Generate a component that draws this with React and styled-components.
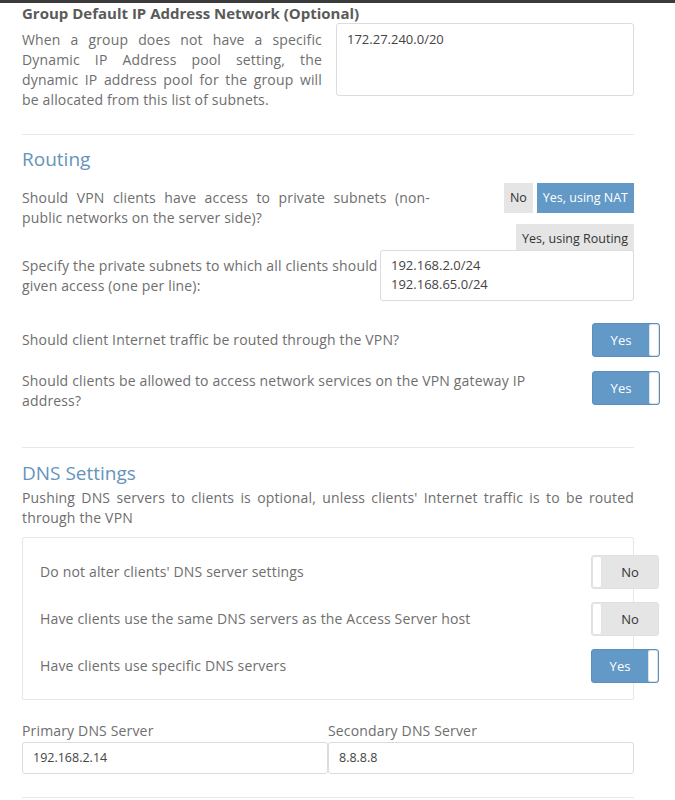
import React from 'react';
import styled, { createGlobalStyle } from 'styled-components';

const Global = createGlobalStyle`
  body {
    margin: 0;
    background: #fff;
    font-family: "Open Sans", "DejaVu Sans", sans-serif;
    color: #6e6e6e;
  }
`;

const TopBar = styled.div`
  height: 3px;
  background: #3b3b3b;
`;

const Page = styled.div`
  padding: 0 41px 0 22px;
`;

const GroupTitle = styled.h3`
  margin: 0;
  padding-top: 1px;
  font-size: 15px;
  font-weight: 700;
  color: #5a5a5a;
  line-height: 18px;
`;

const TwoCol = styled.div`
  display: grid;
  grid-template-columns: 300px 1fr;
  gap: 14px;
  margin-top: 1px;
`;

const Para = styled.p`
  margin: 0;
  font-size: 14px;
  letter-spacing: 0.16px;
  line-height: 20px;
  text-align: ${(p) => (p.justify ? 'justify' : 'left')};
  padding-top: ${(p) => p.top || 0}px;
`;

const TextBox = styled.div`
  border: 1px solid #dcdcdc;
  border-radius: 3px;
  background: #fff;
  padding: 6px 10px;
  font-size: 13px;
  line-height: 19px;
  color: #444;
  height: ${(p) => p.h}px;
  box-sizing: border-box;
`;

const Divider = styled.hr`
  border: 0;
  border-top: 1px solid #e8e8e8;
  margin: ${(p) => p.top}px 0 0;
`;

const SectionTitle = styled.h2`
  margin: ${(p) => p.top}px 0 0;
  font-size: 19px;
  font-weight: 400;
  color: #6593bb;
  line-height: 26px;
`;

const Question = styled.div`
  display: flex;
  justify-content: space-between;
  align-items: flex-start;
  margin-top: ${(p) => p.top || 0}px;
`;

const QuestionText = styled(Para)`
  max-width: 408px;
`;

const ButtonGroup = styled.div`
  display: flex;
  flex-wrap: wrap;
  justify-content: flex-end;
  width: 135px;
  gap: 11px 4px;
  margin-top: -5px;
`;

const ChoiceButton = styled.div`
  padding: 0 6px;
  height: 30px;
  line-height: 30px;
  font-size: 12.5px;
  color: ${(p) => (p.active ? '#fff' : '#333')};
  background: ${(p) => (p.active ? '#6399c6' : '#e5e5e5')};
  white-space: nowrap;
`;

const SubnetRow = styled.div`
  display: grid;
  grid-template-columns: 358px 1fr;
  margin-top: -4px;
`;

const SubnetLabel = styled(Para)`
  grid-column: 1 / 3;
  grid-row: 1;
  width: 405px;
  padding-top: 6px;
`;

const SubnetBox = styled(TextBox)`
  grid-column: 2;
  grid-row: 1;
  z-index: 1;
  padding: 5px 10px;
`;

const ToggleRow = styled.div`
  display: flex;
  justify-content: space-between;
  align-items: center;
  margin-top: ${(p) => p.top || 0}px;
  margin-right: -26px;
`;

const ToggleText = styled(Para)`
  max-width: 545px;
`;

const Toggle = styled.div`
  flex: none;
  width: 68px;
  height: 34px;
  box-sizing: border-box;
  border-radius: 3px;
  border: 1px solid ${(p) => (p.on ? '#5a8fbc' : '#e0e0e0')};
  background: ${(p) => (p.on ? '#6399c6' : '#e5e5e5')};
  display: flex;
  flex-direction: ${(p) => (p.on ? 'row' : 'row-reverse')};
  overflow: hidden;
  margin-top: ${(p) => (p.lift ? -6 : 0)}px;
`;

const ToggleLabel = styled.div`
  flex: 1;
  text-align: center;
  line-height: 32px;
  font-size: 13px;
  color: ${(p) => (p.on ? '#fff' : '#333')};
`;

const Knob = styled.div`
  width: 10px;
  background: #fff;
  border-radius: 3px;
  box-shadow: inset 0 0 0 1px #e2e2e2;
`;

const DnsBox = styled.div`
  border: 1px solid #e6e6e6;
  border-radius: 2px;
  margin-top: 9px;
  padding: 17px 0 16px 17px;
  display: flex;
  flex-direction: column;
  gap: 13px;
`;

const DnsGrid = styled.div`
  display: grid;
  grid-template-columns: 306px 1fr;
  margin-top: 21px;
`;

const Field = styled.div`
  display: flex;
  flex-direction: column;
`;

const FieldLabel = styled.label`
  font-size: 14px;
  letter-spacing: 0.16px;
  line-height: 20px;
  margin-bottom: 1px;
`;

const Input = styled.div`
  height: 32px;
  box-sizing: border-box;
  border: 1px solid #dcdcdc;
  border-radius: 3px;
  padding: 0 10px;
  line-height: 30px;
  font-size: 12.5px;
  color: #444;
`;

const Switch = ({ on, lift }) => (
  <Toggle on={on} lift={lift}>
    <ToggleLabel on={on}>{on ? 'Yes' : 'No'}</ToggleLabel>
    <Knob />
  </Toggle>
);

export default function App() {
  return (
    <>
      <Global />
      <TopBar />
      <Page>
        <GroupTitle>Group Default IP Address Network (Optional)</GroupTitle>
        <TwoCol>
          <Para justify top={7}>
            When a group does not have a specific Dynamic IP Address pool setting, the dynamic IP
            address pool for the group will be allocated from this list of subnets.
          </Para>
          <TextBox h={73}>172.27.240.0/20</TextBox>
        </TwoCol>

        <Divider top={24} />
        <SectionTitle top={11}>Routing</SectionTitle>

        <Question top={16}>
          <QuestionText justify>
            Should VPN clients have access to private subnets (non-public networks on the server
            side)?
          </QuestionText>
          <ButtonGroup>
            <ChoiceButton>No</ChoiceButton>
            <ChoiceButton active>Yes, using NAT</ChoiceButton>
            <ChoiceButton>Yes, using Routing</ChoiceButton>
          </ButtonGroup>
        </Question>

        <SubnetRow>
          <SubnetLabel>
            Specify the private subnets to which all clients should be given access (one per line):
          </SubnetLabel>
          <SubnetBox h={51}>
            192.168.2.0/24
            <br />
            192.168.65.0/24
          </SubnetBox>
        </SubnetRow>

        <ToggleRow top={22}>
          <ToggleText>Should client Internet traffic be routed through the VPN?</ToggleText>
          <Switch on />
        </ToggleRow>
        <ToggleRow top={14}>
          <ToggleText>
            Should clients be allowed to access network services on the VPN gateway IP address?
          </ToggleText>
          <Switch on lift />
        </ToggleRow>

        <Divider top={36} />
        <SectionTitle top={12}>DNS Settings</SectionTitle>
        <Para justify top={2}>
          Pushing DNS servers to clients is optional, unless clients' Internet traffic is to be
          routed through the VPN
        </Para>

        <DnsBox>
          <ToggleRow>
            <ToggleText>Do not alter clients' DNS server settings</ToggleText>
            <Switch />
          </ToggleRow>
          <ToggleRow>
            <ToggleText>Have clients use the same DNS servers as the Access Server host</ToggleText>
            <Switch />
          </ToggleRow>
          <ToggleRow>
            <ToggleText>Have clients use specific DNS servers</ToggleText>
            <Switch on />
          </ToggleRow>
        </DnsBox>

        <DnsGrid>
          <Field>
            <FieldLabel>Primary DNS Server</FieldLabel>
            <Input>192.168.2.14</Input>
          </Field>
          <Field>
            <FieldLabel>Secondary DNS Server</FieldLabel>
            <Input>8.8.8.8</Input>
          </Field>
        </DnsGrid>

        <Divider top={23} />
      </Page>
    </>
  );
}
